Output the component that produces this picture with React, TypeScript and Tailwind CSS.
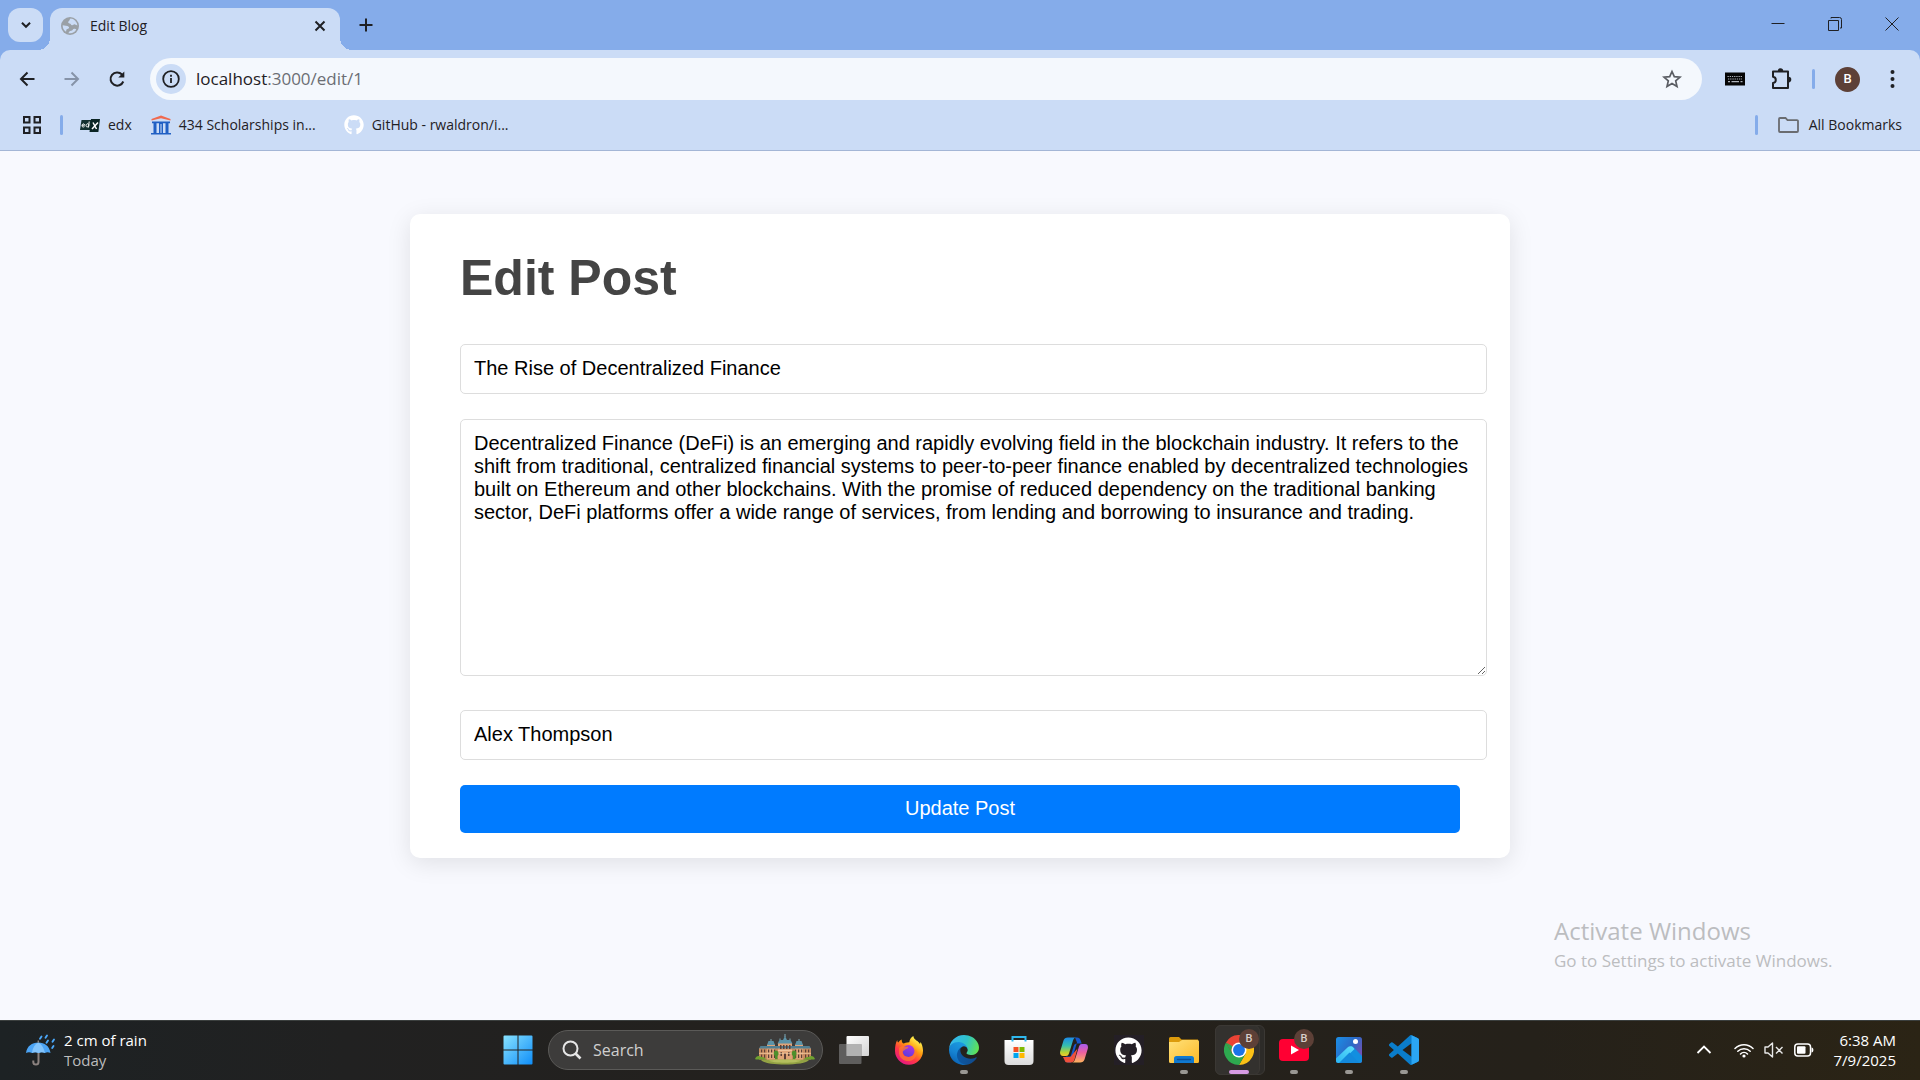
import React from "react";
import { FaGithub } from "react-icons/fa";

const UI = "font-['Open_Sans','Noto_Sans',sans-serif]";

/* ---------- browser chrome icons ---------- */

function Globe() {
  return (
    <svg width="18" height="18" viewBox="0 0 18 18" aria-hidden="true">
      <circle cx="9" cy="9" r="9" fill="#9aa0a6" />
      <path d="M9.500 1.600c-1.200.9-.6 2-1.700 2.600-1.300.6-.6 2 .7 2.200 1.500.2 1.200 1.500 2.500 1.800 1.300.3 1.500-1.200 3-.8 1 .3 1.700.9 2.400 1A7.400 7.400 0 0 0 9.500 1.600z" fill="#cbdcf6" />
      <path d="M1.700 8.200c2 .4 4.600.2 6 1.500 1 1-.2 2-1.500 2.200-1.400.3-.6 1.700-1.200 2.900A7.400 7.400 0 0 1 1.700 8.200zM7.500 16.200c.6-1.700 1-2.200 2.600-2.400 1.800-.2 1.500-1.800 3.200-2 1-.1 1.600.3 2 .8a7.500 7.500 0 0 1-7.800 3.600z" fill="#cbdcf6" />
    </svg>
  );
}

function Line({ d, size = 20, w = 2, color = "#1f2024" }: { d: string; size?: number; w?: number; color?: string }) {
  return (
    <svg width={size} height={size} viewBox="0 0 20 20" fill="none" stroke={color} strokeWidth={w} aria-hidden="true">
      <path d={d} />
    </svg>
  );
}

function Reload() {
  return (
    <svg width="20" height="20" viewBox="0 0 20 20" fill="none" aria-hidden="true">
      <path d="M16.300 12.500A6.600 6.600 0 1 1 15 5.500l1.500 1.500" stroke="#1f2024" strokeWidth="2" />
      <path d="M17.300 2.500v6H11.300z" fill="#1f2024" />
    </svg>
  );
}

function Apps() {
  return (
    <svg width="18" height="18" viewBox="0 0 18 18" fill="none" stroke="#1f2024" strokeWidth="2" aria-hidden="true">
      <path d="M1 1h5.500v5.500H1zM11.500 1H17v5.500h-5.500zM1 11.500h5.500V17H1zM11.500 11.500H17V17h-5.500z" />
    </svg>
  );
}

function Puzzle() {
  return (
    <svg width="22" height="22" viewBox="0 0 22 22" aria-hidden="true">
      <path d="M3 3.500h15v16.500H3v-5c1.800-.3 2.800-1.500 2.800-3.100S4.800 9.100 3 8.800z" fill="none" stroke="#1f2024" strokeWidth="2" strokeLinejoin="round" />
      <path d="M7.800 3a2.700 2.700 0 0 1 5.400 0zM18.500 8.800a2.800 2.800 0 0 1 0 5.600z" fill="#1f2024" />
    </svg>
  );
}

function Keyboard() {
  return (
    <svg width="20" height="14" viewBox="0 0 20 14" aria-hidden="true">
      <rect width="20" height="13" y="0.500" fill="#050505" />
      <g fill="none" stroke="#aeb2ba" strokeWidth="1.200">
        <path d="M2.500 4.500h15" strokeDasharray="1.300 0.900" />
        <path d="M3 7h14" strokeDasharray="1.300 0.900" />
        <path d="M3 9.600h2M6.500 9.600h7.500M15.500 9.600h2" />
      </g>
    </svg>
  );
}

function Edx() {
  return (
    <svg width="20" height="13" viewBox="0 0 20 13" aria-hidden="true">
      <path d="M1.500 1h10l-1 10H0z" fill="#12302f" />
      <path d="M11 0h9l-1.600 13H9.500z" fill="#0b2524" />
      <path d="M13 3.500l3.500 6.500M18 3.500l-6 6.500" stroke="#fff" strokeWidth="1.500" />
      <path d="M2 6.200h2.600c0-2-2.600-1.600-2.600.4 0 1.800 1.600 1.600 2.500 1M9.200 2.500L8.500 8.500M8.800 6c0-2-2.800-1.400-2.800.5C6 8.500 8.600 8.300 8.800 6.300z" stroke="#fff" strokeWidth="1" fill="none" />
    </svg>
  );
}

function Temple() {
  return (
    <svg width="20" height="20" viewBox="0 0 20 20" aria-hidden="true">
      <path d="M10 .5L19.500 4v1.500L10 3.200.5 5.500V4z" fill="#f0694f" />
      <path d="M1 6.500h18v1.800H1zM2.500 8h3v10h-3zM8 8h4v10H8zM14.500 8h3v10h-3zM0 18h20v1.600H0z" fill="#2160c4" />
      <path d="M9.500 9h1v9h-1z" fill="#cfe0fa" />
    </svg>
  );
}

/* ---------- taskbar icons ---------- */

function Umbrella() {
  return (
    <svg width="30" height="32" viewBox="0 0 30 32" aria-hidden="true">
      <path d="M12.500 17v11a2.600 2.600 0 0 1-5.200 0v-1.500" fill="none" stroke="#8b827f" strokeWidth="2" />
      <path d="M0 19C1 12 6 8.500 12.300 8.500S23.500 12 24.500 19c-2-1-4-1-5.500 0-2-1-4.500-1-6.500 0-2-1-4.500-1-6.500 0-2-1-4-1-6 0z" fill="#4ca4f4" />
      <path d="M6 19c.5-5 3-9 6.300-10.500C15.500 10 18 14 19 19c-2-1-4.500-1-6.500 0-2-1-4.500-1-6.500 0z" fill="#83c4fb" />
      <path d="M12.300 6.500v2" stroke="#8b827f" strokeWidth="1.500" />
      <path d="M15.500 2.500l-1.500 2.300M21 1.500l-1.500 2.300M22 6.500l-1.500 2.300M28 5.500l-1.500 2.300M27.500 12l-1.300 2" stroke="#4ba8fa" strokeWidth="1.900" strokeLinecap="round" />
    </svg>
  );
}

function Start() {
  return (
    <svg width="30" height="30" viewBox="0 0 30 30" aria-hidden="true">
      <defs>
        <linearGradient id="win" x1="0" y1="0" x2="30" y2="30" gradientUnits="userSpaceOnUse">
          <stop stopColor="#8ae4ff" />
          <stop offset="1" stopColor="#0d8cf8" />
        </linearGradient>
      </defs>
      <path d="M1.500.5H14.500v14H.5V1.500a1 1 0 0 1 1-1zM15.500.5h13a1 1 0 0 1 1 1v13h-14zM.5 15.500h14v14h-13a1 1 0 0 1-1-1zM15.500 15.500h14v13a1 1 0 0 1-1 1h-13z" fill="url(#win)" />
    </svg>
  );
}

function Mansion() {
  const bays = [6, 9, 13, 16, 19, 40, 43, 46, 50, 53];
  return (
    <svg width="60" height="32" viewBox="0 0 60 32" aria-hidden="true">
      <path d="M6 26c8-2.500 40-2.500 48 0-4 6-44 6-48 0z" fill="#93a244" />
      <path d="M4 14h52v11.500H4z" fill="#c98b5f" />
      <path d="M12 10.500h8v15h-8zM40 10.500h8v15h-8zM23 9h14v16.500H23z" fill="#dfa377" />
      <path d="M4 14.500l1.500-2.500h49l1.500 2.500z" fill="#517f92" />
      <path d="M12 11l1.500-4h5l1.500 4zM40 11l1.500-4h5l1.500 4zM22.500 9.500L24.500 6h11l2 3.500zM28 6l2-4 2 4z" fill="#5c93a8" />
      <path d="M30 0v3M16 7V5M44 7V5M25 6V4.500M35 6V4.500" stroke="#7fa9b8" strokeWidth="1" />
      <g fill="#5d4037">
        {bays.map((x) => (
          <rect key={x} x={x} y="15.500" width="1.200" height="3" />
        ))}
        {bays.map((x) => (
          <rect key={x} x={x} y="20.500" width="1.200" height="3.500" />
        ))}
        <path d="M25 11h1.500v4H25zM28 11h1.500v4H28zM31 11h1.500v4H31zM34 11h1.500v4H34zM25.500 18H27v4h-1.500zM33 18h1.500v4H33zM29 19h2v6.500h-2z" />
      </g>
      <path d="M4 19.300h52M23 16.500h14" stroke="#f2cda6" strokeWidth="0.800" />
      <path d="M21 16.500c2.500 0 3.500 4 1.500 5.500v3h-2.500v-3c-2-1.500-1.500-5.500 1-5.500zM39 16.500c2.500 0 3.500 4 1.500 5.500v3H38v-3c-2-1.500-1.500-5.500 1-5.500z" fill="#4f8f2c" />
      <path d="M0 25c1-2.500 3-3.500 5-2.500s5 0 6 3H1zM60 25c-1-2.500-3-3.500-5-2.500s-5 0-6 3h10z" fill="#6fa12f" />
      <path d="M14 26.500c8-1.500 24-1.500 32 0-3 3-29 3-32 0z" fill="#b4bf5e" />
    </svg>
  );
}

function TaskView() {
  return (
    <svg width="30" height="28" viewBox="0 0 30 28" aria-hidden="true">
      <defs>
        <linearGradient id="tv" x1="0" y1="0" x2="1" y2="1">
          <stop stopColor="#ffffff" />
          <stop offset="1" stopColor="#d4d4d4" />
        </linearGradient>
      </defs>
      <rect x="7.500" y="0" width="22.500" height="20" rx="1" fill="url(#tv)" />
      <rect x="0" y="8" width="22.500" height="20" rx="1" fill="#6e6e6e" fillOpacity="0.800" />
      <path d="M7.500 8h15v12h-15z" fill="#b2b2b2" />
    </svg>
  );
}

function Firefox() {
  return (
    <svg width="28" height="29" viewBox="0 0 28 29" aria-hidden="true">
      <defs>
        <linearGradient id="ff" x1="22" y1="3" x2="5" y2="27" gradientUnits="userSpaceOnUse">
          <stop stopColor="#fff44f" />
          <stop offset="0.350" stopColor="#ff980e" />
          <stop offset="0.650" stopColor="#ff3647" />
          <stop offset="1" stopColor="#e31587" />
        </linearGradient>
        <linearGradient id="ffb" x1="16" y1="8" x2="10" y2="20" gradientUnits="userSpaceOnUse">
          <stop stopColor="#b833e1" />
          <stop offset="1" stopColor="#5b3ddb" />
        </linearGradient>
      </defs>
      <path d="M18.300 0c-2.500 1.500-3.800 4-4 6.200C11 6.300 9.600 6.900 8.500 7.600 7 7 6.600 5 6.700 3.600 5.300 4.300 4 5.500 3.200 6.600 2.400 6 2.300 4.700 2.300 4 .8 6.200 0 10.500 0 14.500A14 14 0 0 0 28 15c.1-3.800-1.200-7-2.500-9-.1 1-.3 1.500-.6 2C23.500 4.500 19 4.500 18.300 0z" fill="url(#ff)" />
      <circle cx="13.500" cy="15" r="6" fill="url(#ffb)" />
      <path d="M4 12c1.500-2 3.300-2 5-1.500 1 .5 2.500.5 4 .3 1 1-.3 2-2.500 2.500-.8 1.200-2.200 1-2.800 2.500-.4 2 1 4.500 4.300 5C17 21.500 21 18 20.500 13c1.500 2 2 6.500-1 9.500-5 5-14.500 2.500-15.500-5z" fill="#ff7a2e" fillOpacity="0.700" />
    </svg>
  );
}

function Edge() {
  return (
    <svg width="30" height="30" viewBox="0 0 256 256" aria-hidden="true">
      <defs>
        <linearGradient id="e1" x1="60" y1="180" x2="235" y2="180" gradientUnits="userSpaceOnUse">
          <stop stopColor="#0c59a4" />
          <stop offset="1" stopColor="#114a8b" />
        </linearGradient>
        <linearGradient id="e2" x1="150" y1="70" x2="60" y2="240" gradientUnits="userSpaceOnUse">
          <stop stopColor="#1b9de2" />
          <stop offset="0.600" stopColor="#1683d2" />
          <stop offset="1" stopColor="#0c66b8" />
        </linearGradient>
        <linearGradient id="e3" x1="20" y1="50" x2="250" y2="130" gradientUnits="userSpaceOnUse">
          <stop stopColor="#35b8ee" />
          <stop offset="0.500" stopColor="#2fc2c9" />
          <stop offset="1" stopColor="#63e44f" />
        </linearGradient>
      </defs>
      <path fill="url(#e1)" d="M231 190.500c-3.400 1.800-6.900 3.400-10.500 4.700a101.100 101.100 0 0 1-35.900 6.500c-47.300 0-88.500-32.500-88.500-74.300a31.500 31.500 0 0 1 16.400-27.300c-42.800 1.800-53.800 46.400-53.800 72.500 0 73.900 68.100 81.400 82.800 81.400 7.900 0 19.800-2.300 27-4.600l1.300-.4a128.300 128.300 0 0 0 66.600-52.800 4 4 0 0 0-5.400-5.700z" />
      <path fill="url(#e2)" d="M105.700 241.400a79.200 79.200 0 0 1-22.700-21.300 80.700 80.700 0 0 1 29.500-120c3.200-1.500 8.500-4.100 15.600-4a32.400 32.400 0 0 1 25.700 13 31.900 31.900 0 0 1 6.300 18.700c0-.2 24.500-79.600-80-79.600-43.900 0-80 41.700-80 78.200a130.200 130.200 0 0 0 12.100 56 128 128 0 0 0 156.400 67 75.500 75.500 0 0 1-62.800-8z" />
      <path fill="url(#e3)" d="M152.300 148.900c-.9 1-3.400 2.500-3.400 5.600 0 2.600 1.700 5.200 4.800 7.300 14.300 10 41.400 8.600 41.500 8.600a59.600 59.600 0 0 0 30.300-8.300 61.400 61.400 0 0 0 30.400-52.900c.3-22.400-8-37.300-11.300-43.900C223.500 23.900 177.700 0 128 0A128 128 0 0 0 0 126.200c.5-36.500 36.800-66 80-66 3.500 0 23.500.3 42 10a72.600 72.600 0 0 1 30.900 29.300c6.100 10.600 7.200 24.100 7.200 29.500s-2.700 13.300-7.800 19.900z" />
    </svg>
  );
}

function Store() {
  return (
    <svg width="30" height="30" viewBox="0 0 30 30" aria-hidden="true">
      <defs>
        <linearGradient id="st" x1="0" y1="0" x2="0" y2="1">
          <stop stopColor="#ffffff" />
          <stop offset="1" stopColor="#dcdcdc" />
        </linearGradient>
      </defs>
      <path d="M.5 5h29v21a4 4 0 0 1-4 4h-21a4 4 0 0 1-4-4z" fill="url(#st)" />
      <path d="M8.500 6.500V2h13v4.500" fill="none" stroke="#2fb8ee" strokeWidth="2" />
      <path d="M9.500 12h5v5h-5z" fill="#f25022" />
      <path d="M15.500 12h5v5h-5z" fill="#7fba00" />
      <path d="M9.500 18h5v5h-5z" fill="#00a4ef" />
      <path d="M15.500 18h5v5h-5z" fill="#ffb900" />
    </svg>
  );
}

function Copilot() {
  return (
    <svg width="28" height="26" viewBox="0 0 28 26" aria-hidden="true">
      <defs>
        <linearGradient id="c1" x1="0" y1="0" x2="0" y2="1">
          <stop stopColor="#1c8be8" />
          <stop offset="0.450" stopColor="#36bfae" />
          <stop offset="0.800" stopColor="#b6d334" />
          <stop offset="1" stopColor="#f5c92c" />
        </linearGradient>
        <linearGradient id="c2" x1="0" y1="0" x2="0" y2="1">
          <stop stopColor="#a55cf0" />
          <stop offset="0.450" stopColor="#ec5fa2" />
          <stop offset="1" stopColor="#ffb35c" />
        </linearGradient>
      </defs>
      <path d="M8 .5h9c2 0 3 1 3.700 3l1 3H17c-2 0-2.800 1-3.400 3l-3 10H6c-2 4-1.500 5 2 6h3l6-20L15 .5z" fill="#1757c9" />
      <path d="M7 25.500h4c2 0 3-1 3.500-3l3-11L12 18c-1 2-2 2-4 2H3l1.500 3c.6 1.700 1.200 2.500 2.500 2.500z" fill="#f0503c" />
      <path d="M8 .5h8c-1.500 0-2.300 1-3 3l-4 13c-.6 1.700-1.500 2.500-3 2.500H3c-2.500 0-3.500-2-2.700-5L3.500 3.500C4.200 1.500 5.500.5 8 .5z" fill="url(#c1)" />
      <path d="M20 25.500h-8c1.500 0 2.300-1 3-3l4-13c.6-1.700 1.500-2.500 3-2.500h3c2.500 0 3.500 2 2.700 5l-3.200 10.500c-.7 2-2 3-4.500 3z" fill="url(#c2)" />
    </svg>
  );
}

function GitHubTile() {
  return (
    <span className="flex size-[30px] items-center justify-center bg-[#241f26]">
      <FaGithub className="size-[27px] text-white" />
    </span>
  );
}

function Explorer() {
  return (
    <svg width="30" height="27" viewBox="0 0 30 27" aria-hidden="true">
      <defs>
        <linearGradient id="fo" x1="0" y1="0" x2="1" y2="1">
          <stop stopColor="#ffe17a" />
          <stop offset="1" stopColor="#fcb928" />
        </linearGradient>
      </defs>
      <path d="M0 1.500A1.500 1.500 0 0 1 1.500 0H10l2.500 2.500H29V9H0z" fill="#dc9b0c" />
      <path d="M0 5h10l3-2h15.500A1.500 1.500 0 0 1 30 4.500v20a1.500 1.500 0 0 1-1.500 1.500h-27A1.500 1.500 0 0 1 0 24.500z" fill="url(#fo)" />
      <path d="M5 26v-4.500A2.500 2.500 0 0 1 7.500 19h15a2.500 2.500 0 0 1 2.500 2.500V26z" fill="#1079d0" />
      <path d="M8.500 22.500h13" stroke="#0b4f97" strokeWidth="1.300" strokeLinecap="round" />
    </svg>
  );
}

function Chrome() {
  return (
    <svg width="30" height="30" viewBox="0 0 48 48" aria-hidden="true">
      <path d="M24 12h20.800A24 24 0 0 1 24 48l10.400-18z" fill="#fbc116" />
      <path d="M3.200 12A24 24 0 0 0 24 48l10.400-18H13.600z" fill="#2da94f" />
      <path d="M3.200 12L13.600 30 24 12h20.800A24 24 0 0 0 3.200 12z" fill="#ea4335" />
      <path d="M3.200 12L13.600 30A12 12 0 0 1 13.600 18z" fill="#2da94f" />
      <circle cx="24" cy="24" r="12" fill="#fff" />
      <circle cx="24" cy="24" r="9.500" fill="#1a73e8" />
    </svg>
  );
}

function YouTube() {
  return (
    <svg width="30" height="22" viewBox="0 0 30 22" aria-hidden="true">
      <rect width="30" height="22" rx="4" fill="#ff0033" />
      <path d="M12 6.500v9l8-4.500z" fill="#fff" />
    </svg>
  );
}

function Photos() {
  return (
    <svg width="26" height="26" viewBox="0 0 26 26" aria-hidden="true">
      <defs>
        <linearGradient id="ph" x1="0" y1="0" x2="1" y2="0.600">
          <stop stopColor="#1b8fe6" />
          <stop offset="0.600" stopColor="#2b69c6" />
          <stop offset="1" stopColor="#7252b4" />
        </linearGradient>
        <linearGradient id="ph2" x1="0" y1="1" x2="1" y2="0">
          <stop stopColor="#2ab4f3" />
          <stop offset="1" stopColor="#5fe0fb" />
        </linearGradient>
      </defs>
      <rect width="26" height="26" rx="2.500" fill="url(#ph)" />
      <path d="M10 14l3-3.500c1.300-1.300 3.500-1.300 4.800 0L26 19v4.500a2.500 2.500 0 0 1-2.500 2.500H16z" fill="#128fe0" />
      <path d="M0 21.500L11.500 10.500c1.800-1.700 4.500-1.500 6 .2l1 1.300L4 26H2.500A2.500 2.500 0 0 1 0 23.500z" fill="url(#ph2)" />
      <path d="M3 26l10.500-10.500L23 26z" fill="#1389dc" />
      <circle cx="19.500" cy="4.500" r="2.500" fill="#fff" />
    </svg>
  );
}

function VsCode() {
  return (
    <svg width="30" height="30" viewBox="0 0 24 24" aria-hidden="true">
      <path
        fill="#0a7dcb"
        d="M23.150 2.587L18.210.21a1.494 1.494 0 0 0-1.705.29l-9.460 8.630-4.120-3.128a.999.999 0 0 0-1.276.057L.327 7.261A1 1 0 0 0 .326 8.740L3.899 12 .326 15.260a1 1 0 0 0 .001 1.479L1.650 17.940a.999.999 0 0 0 1.276.057l4.120-3.128 9.460 8.630a1.492 1.492 0 0 0 1.704.29l4.942-2.377A1.500 1.500 0 0 0 24 20.060V3.939a1.500 1.500 0 0 0-.85-1.352zm-5.146 14.861L10.826 12l7.178-5.448v10.896z"
      />
      <path d="M18 .15L23.150 2.600a1.500 1.500 0 0 1 .85 1.340v16.120a1.500 1.500 0 0 1-.85 1.350L18 23.850z" fill="#2ba6f4" />
    </svg>
  );
}

function Wifi() {
  return (
    <svg width="20" height="15" viewBox="0 0 20 15" fill="none" stroke="#fff" strokeWidth="1.500" strokeLinecap="round" aria-hidden="true">
      <path d="M1 5.500a12.700 12.700 0 0 1 18 0M3.800 8.300a8.800 8.800 0 0 1 12.400 0M6.500 11a5 5 0 0 1 7 0" />
      <circle cx="10" cy="13" r="1.600" fill="#fff" stroke="none" />
    </svg>
  );
}

function Muted() {
  return (
    <svg width="20" height="16" viewBox="0 0 20 16" fill="none" stroke="#e8e8e8" strokeWidth="1.400" aria-hidden="true">
      <path d="M1 5h3l4.500-4v14L4 11H1zM12 5l6.500 6.500M18.500 5L12 11.500" strokeLinejoin="round" />
    </svg>
  );
}

function Battery() {
  return (
    <svg width="20" height="14" viewBox="0 0 20 14" aria-hidden="true">
      <rect x="0.800" y="1" width="15.700" height="12" rx="3" fill="none" stroke="#fff" strokeWidth="1.500" />
      <rect x="3" y="3.200" width="8.500" height="7.600" rx="1" fill="#fff" />
      <path d="M17.500 4.500c2.500 0 2.500 5 0 5z" fill="#fff" />
    </svg>
  );
}

/* ---------- pieces ---------- */

type App = { name: string; icon: React.ReactNode; running?: boolean; active?: boolean; badge?: boolean };

const apps: App[] = [
  { name: "Task view", icon: <TaskView /> },
  { name: "Firefox", icon: <Firefox /> },
  { name: "Microsoft Edge", icon: <Edge />, running: true },
  { name: "Microsoft Store", icon: <Store /> },
  { name: "Copilot", icon: <Copilot /> },
  { name: "GitHub Desktop", icon: <GitHubTile /> },
  { name: "File Explorer", icon: <Explorer />, running: true },
  { name: "Google Chrome", icon: <Chrome />, active: true, badge: true },
  { name: "YouTube", icon: <YouTube />, running: true, badge: true },
  { name: "Photos", icon: <Photos />, running: true },
  { name: "Visual Studio Code", icon: <VsCode />, running: true },
];

function TaskButton({ app }: { app: App }) {
  return (
    <button aria-label={app.name} className="relative flex h-[60px] w-[55px] items-center justify-center">
      {app.active && (
        <>
          <span className="absolute top-[5px] left-1 h-[50px] w-[50px] rounded-md border border-[#3b3834] bg-[#2d2b28]" />
          <span className="absolute top-[5px] left-1 h-[50px] w-[45px] rounded-md border border-[#3b3834] bg-[#33312e]" />
        </>
      )}
      <span className="relative">{app.icon}</span>
      {app.badge && (
        <span className="absolute top-[9px] right-[7px] flex size-5 items-center justify-center rounded-full bg-[#5d4037] font-['Roboto',sans-serif] text-[11px] font-medium text-[#d9cfcb]">
          B
        </span>
      )}
      {app.running && <span className="absolute bottom-[6px] h-1 w-2 rounded-full bg-[#9a9894]" />}
      {app.active && <span className="absolute bottom-[6px] h-1 w-5 rounded-full bg-[#d69ae3]" />}
    </button>
  );
}

function Separator() {
  return <span className="h-5 w-[3px] rounded-full bg-[#85acea]" />;
}

function TabStrip() {
  return (
    <div className="flex h-[50px] items-start justify-between pl-2">
      <div className="flex items-start">
        <button aria-label="Search tabs" className="mt-2 mr-[7px] flex h-[34px] w-[35px] items-center justify-center rounded-xl bg-[#cbdcf6]">
          <Line d="M5.500 7.500l4.500 4.500 4.500-4.500" w={2.200} size={18} />
        </button>
        <div className="relative mt-2 flex h-[42px] w-[290px] items-center rounded-t-xl bg-[#cbdcf6] pr-[10px] pb-[7px] pl-[11px]">
          <span className="absolute bottom-0 -left-3 size-3 bg-[radial-gradient(circle_at_0_0,transparent_12px,#cbdcf6_12px)]" />
          <span className="absolute -right-3 bottom-0 size-3 bg-[radial-gradient(circle_at_100%_0,transparent_12px,#cbdcf6_12px)]" />
          <Globe />
          <span className="ml-[11px] flex-1 text-sm text-[#1f2024]">Edit Blog</span>
          <button aria-label="Close tab">
            <Line d="M5.500 5.500l9 9M14.500 5.500l-9 9" size={20} w={2} />
          </button>
        </div>
        <button aria-label="New tab" className="mt-[15px] ml-4">
          <Line d="M10 3.500v13M3.500 10h13" />
        </button>
      </div>
      <div className="flex h-[48px] items-center">
        <button aria-label="Minimize" className="flex w-[57px] justify-center">
          <Line d="M3.500 9.500h13" w={1} />
        </button>
        <button aria-label="Restore" className="flex w-[57px] justify-center">
          <Line d="M3.500 6.500h10v10h-10zM6 4.500V3.500h8.500a2 2 0 0 1 2 2V14h-1.500" w={1} />
        </button>
        <button aria-label="Close" className="flex w-[57px] justify-center">
          <Line d="M3.500 3.500l13 13M16.500 3.500l-13 13" w={1} />
        </button>
      </div>
    </div>
  );
}

function Toolbar() {
  return (
    <div className="flex items-center pt-2 pr-[18px] pl-[17px]">
      <div className="flex w-[133px] items-center gap-[25px]">
        <button aria-label="Back">
          <Line d="M17.500 10H4M10.500 3.500L4 10l6.500 6.500" />
        </button>
        <button aria-label="Forward">
          <Line d="M2.500 10H16M9.500 3.500L16 10l-6.500 6.500" color="#8693a8" />
        </button>
        <button aria-label="Reload">
          <Reload />
        </button>
      </div>
      <div className="flex h-[42px] flex-1 items-center rounded-full bg-[#f4f8fd] pr-5 pl-[6px]">
        <button aria-label="View site information" className="flex size-[30px] items-center justify-center rounded-full bg-[#cbdcf6]">
          <svg width="18" height="18" viewBox="0 0 18 18" fill="none" stroke="#1f2024" strokeWidth="1.800" aria-hidden="true">
            <circle cx="9" cy="9" r="7.800" />
            <path d="M9 8v5M9 4.700v2" />
          </svg>
        </button>
        <div className="ml-[10px] flex-1 text-[17px] text-[#1f2024]" role="textbox" aria-label="Address">
          localhost<span className="text-[#6b6e74]">:3000/edit/1</span>
        </div>
        <button aria-label="Bookmark this tab">
          <svg width="20" height="20" viewBox="0 0 20 20" fill="none" stroke="#5a5d63" strokeWidth="1.700" aria-hidden="true">
            <path d="M10 2.500l2.300 5.200 5.700.5-4.300 3.700 1.300 5.600-5-3-5 3 1.300-5.600L2 8.200l5.700-.5z" />
          </svg>
        </button>
      </div>
      <div className="ml-[23px] flex items-center">
        <button aria-label="Keyboard extension">
          <Keyboard />
        </button>
        <button aria-label="Extensions" className="mr-5 ml-[25px]">
          <Puzzle />
        </button>
        <Separator />
        <button aria-label="Profile" className="mr-[22px] ml-5 flex size-[25px] items-center justify-center rounded-full bg-[#5d4037] font-['Roboto',sans-serif] text-[13px] font-medium text-white">
          B
        </button>
        <button aria-label="Menu" className="flex w-5 justify-center">
          <svg width="5" height="18" viewBox="0 0 5 18" fill="#1f2024" aria-hidden="true">
            <circle cx="2.500" cy="2" r="2" />
            <circle cx="2.500" cy="9" r="2" />
            <circle cx="2.500" cy="16" r="2" />
          </svg>
        </button>
      </div>
    </div>
  );
}

function Bookmarks() {
  return (
    <nav aria-label="Bookmarks" className="flex h-[51px] items-center justify-between border-b border-[#a4b6d6] pr-[18px] pl-[23px] text-sm text-[#1f2024]">
      <div className="flex items-center">
        <button aria-label="Apps" className="mr-[19px]">
          <Apps />
        </button>
        <Separator />
        <a href="#edx" className="ml-[17px] flex items-center gap-2">
          <Edx />
          edx
        </a>
        <a href="#scholarships" className="ml-[19px] flex items-center gap-2">
          <Temple />
          434 Scholarships in...
        </a>
        <a href="#github" className="ml-7 flex items-center gap-2">
          <FaGithub className="size-5 text-white" />
          GitHub - rwaldron/i...
        </a>
      </div>
      <div className="flex items-center">
        <Separator />
        <button className="ml-5 flex items-center gap-[10px]">
          <svg width="21" height="16" viewBox="0 0 21 16" fill="none" stroke="#6a6c70" strokeWidth="1.800" aria-hidden="true">
            <path d="M1 2a1 1 0 0 1 1-1h5.500l2 2.200H19a1 1 0 0 1 1 1V14a1 1 0 0 1-1 1H2a1 1 0 0 1-1-1z" />
          </svg>
          All Bookmarks
        </button>
      </div>
    </nav>
  );
}

function EditForm() {
  const field =
    "block w-[calc(100%+27px)] rounded-[5px] border border-[#dddddd] bg-white px-[13px] pt-3 pb-[13px] text-xl leading-[23px] text-black outline-none";
  return (
    <form
      onSubmit={(e) => e.preventDefault()}
      className="mx-auto mt-[63px] w-full max-w-[1100px] rounded-[10px] bg-white px-[50px] pt-9 pb-[25px] font-['Liberation_Sans',Arial,sans-serif] shadow-[0_5px_25px_rgba(0,0,0,0.1)]"
    >
      <h1 className="mb-[38px] text-[50px] leading-[56px] font-bold text-[#444444]">Edit Post</h1>
      <input aria-label="Title" defaultValue="The Rise of Decentralized Finance" className={field} />
      <textarea
        aria-label="Content"
        rows={10}
        className={`${field} mt-[25px] mb-[34px] resize`}
        defaultValue="Decentralized Finance (DeFi) is an emerging and rapidly evolving field in the blockchain industry. It refers to the shift from traditional, centralized financial systems to peer-to-peer finance enabled by decentralized technologies built on Ethereum and other blockchains. With the promise of reduced dependency on the traditional banking sector, DeFi platforms offer a wide range of services, from lending and borrowing to insurance and trading."
      />
      <input aria-label="Author" defaultValue="Alex Thompson" className={field} />
      <button type="submit" className="mt-[25px] w-full rounded-[5px] bg-[#007bff] pt-3 pb-[13px] text-xl leading-[23px] text-white">
        Update Post
      </button>
    </form>
  );
}

function Taskbar() {
  return (
    <footer className="grid h-[60px] grid-cols-[1fr_auto_1fr] items-center bg-[linear-gradient(90deg,#1d2224,#212121_18%,#24211d_45%,#25211a_80%,#2b2415)] text-[15px] text-white shadow-[inset_0_1px_0_#3b3f3e]">
      <button className="flex items-center gap-2 justify-self-start pl-[26px] text-left leading-5">
        <Umbrella />
        <span>
          <span className="block">2 cm of rain</span>
          <span className="block text-[#bdbdbd]">Today</span>
        </span>
      </button>
      <div className="flex items-center pl-px">
        <button aria-label="Start" className="flex w-[55px] justify-center">
          <Start />
        </button>
        <label className="mx-[3px] flex h-10 w-[275px] items-center rounded-full border border-[#5b5a58] bg-[#3d3c3b] pr-[7px] pl-[13px]">
          <svg width="20" height="20" viewBox="0 0 20 20" fill="none" stroke="#e6e6e6" strokeWidth="2" aria-hidden="true">
            <circle cx="8.500" cy="8.500" r="7" />
            <path d="M13.500 13.500l5 5" strokeWidth="2.600" />
          </svg>
          <input aria-label="Search" placeholder="Search" className="ml-[11px] w-0 flex-1 bg-transparent text-base outline-none placeholder:text-[#cfcfcf]" />
          <Mansion />
        </label>
        {apps.map((a) => (
          <TaskButton key={a.name} app={a} />
        ))}
      </div>
      <div className="flex items-center justify-self-end pr-6">
        <button aria-label="Show hidden icons" className="mr-5">
          <Line d="M3.500 13l6.500-6.500 6.500 6.500" color="#fff" w={1.8} />
        </button>
        <button aria-label="Network, sound and battery" className="mr-5 flex items-center gap-[10px]">
          <Wifi />
          <Muted />
          <Battery />
        </button>
        <button className="text-right leading-5">
          <span className="block">6:38 AM</span>
          <span className="block">7/9/2025</span>
        </button>
      </div>
    </footer>
  );
}

export default function App() {
  return (
    <div className={`flex min-h-screen flex-col bg-[#f8f9fe] ${UI}`}>
      <header className="bg-[#85acea]">
        <TabStrip />
        <div className="rounded-t-[10px] bg-[#cbdcf6]">
          <Toolbar />
          <Bookmarks />
        </div>
      </header>
      <main className="relative flex-1">
        <EditForm />
        <div className="absolute right-20 bottom-[45px] w-[286px] whitespace-nowrap text-[#bcbdc0]">
          <p className="text-2xl leading-8">Activate Windows</p>
          <p className="text-[17px] leading-7">Go to Settings to activate Windows.</p>
        </div>
      </main>
      <Taskbar />
    </div>
  );
}
